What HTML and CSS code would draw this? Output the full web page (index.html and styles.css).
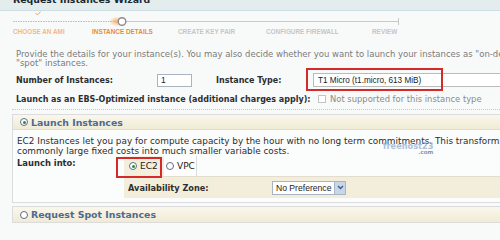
FILE: index.html
```html
<!DOCTYPE html>
<html>
<head>
<meta charset="utf-8">
<link rel="stylesheet" href="styles.css">
</head>
<body>
<div class="page">
  <div class="titlebar"><h1>Request Instances Wizard</h1></div>

  <div class="steps">
    <svg class="track" width="500" height="16" viewBox="0 0 500 16">
      <defs>
        <radialGradient id="glow" cx="0.5" cy="0.5" r="0.5">
          <stop offset="0" stop-color="#f6a850" stop-opacity="0.9"/>
          <stop offset="1" stop-color="#f6a850" stop-opacity="0"/>
        </radialGradient>
      </defs>
      <path d="M35.5 2 L37.5 4 L40.5 0.5" fill="none" stroke="#f0a45a" stroke-width="1"/>
      <line x1="13" y1="10.5" x2="116" y2="10.5" stroke="#f3ad6c" stroke-width="1" stroke-dasharray="1.5 1"/>
      <ellipse cx="117" cy="10.5" rx="8" ry="5" fill="url(#glow)"/>
      <line x1="126" y1="10.5" x2="398" y2="10.5" stroke="#c9c9c9" stroke-width="1"/>
      <line x1="398.5" y1="7" x2="398.5" y2="14" stroke="#c9c9c9" stroke-width="1"/>
      <circle cx="122" cy="10.5" r="3.8" fill="#ffffff" stroke="#8a8a8a" stroke-width="1.4"/>
    </svg>
    <div class="labels">
      <span class="done">Choose an AMI</span>
      <span class="current">Instance Details</span>
      <span>Create Key Pair</span>
      <span>Configure Firewall</span>
      <span>Review</span>
    </div>
  </div>

  <div class="main">
    <p class="intro">
      <span class="line">Provide the details for your instance(s). You may also decide whether you want to launch your instances as "on-demand" or</span>
      <span class="line">"spot" instances.</span>
    </p>

    <div class="row row-top">
      <label class="lbl lbl-num">Number of Instances:</label>
      <span class="input">1</span>
      <label class="lbl lbl-type">Instance Type:</label>
      <span class="select-wrap">
        <span class="select select-wide">T1 Micro (t1.micro, 613 MiB)</span>
        <span class="highlight highlight-type"></span>
      </span>
    </div>

    <div class="row row-ebs">
      <label class="lbl lbl-ebs">Launch as an EBS-Optimized instance (additional charges apply):</label>
      <span class="checkbox"></span>
      <span class="muted">Not supported for this instance type</span>
    </div>

    <div class="panel-head panel-launch">
      <span class="radio radio-on"></span>
      <span>Launch Instances</span>
    </div>
    <div class="panel-body">
      <p class="desc">
        <span class="line">EC2 Instances let you pay for compute capacity by the hour with no long term commitments. This transforms what are</span>
        <span class="line">commonly large fixed costs into much smaller variable costs.</span>
      </p>
      <span class="watermark">freehost23<small>.com</small></span>
      <div class="launch">
        <label class="lbl lbl-into">Launch into:</label>
        <div class="launch-grid">
          <div class="choice-row">
            <span class="choice choice-ec2"><span class="radio radio-on small"></span>EC2<span class="highlight highlight-ec2"></span></span>
            <span class="choice choice-vpc"><span class="radio small"></span>VPC</span>
          </div>
          <div class="az-row">
            <label class="lbl lbl-az">Availability Zone:</label>
            <span class="select select-az">No Preference<span class="arrow"><svg width="7" height="5" viewBox="0 0 7 5"><path d="M1 1 L3.5 3.5 L6 1" fill="none" stroke="#3b5c8c" stroke-width="1.4"/></svg></span></span>
          </div>
        </div>
      </div>
    </div>

    <div class="panel-head panel-spot">
      <span class="radio"></span>
      <span>Request Spot Instances</span>
    </div>
  </div>
</div>
</body>
</html>
```
FILE: styles.css
```css
* { box-sizing: border-box; }

html, body {
  margin: 0;
  padding: 0;
}

body {
  width: 500px;
  height: 240px;
  overflow: hidden;
  background: #f8fafa;
  font-family: "DejaVu Sans", Verdana, sans-serif;
  color: #333;
}

.page {
  width: 620px;
}

.titlebar {
  height: 11px;
  overflow: hidden;
  background: #e4edee;
  border-bottom: 1px solid #cddfe2;
}

.titlebar h1 {
  margin: -6px 0 0 13px;
  font-size: 9.4px;
  line-height: 12px;
  font-weight: bold;
  color: #1c2830;
}

.steps {
  height: 27px;
}

.track {
  display: block;
}

.labels {
  display: grid;
  grid-template-columns: 79px 86px 88px 106px auto;
  padding-left: 13px;
  font-family: "Liberation Sans", Arial, sans-serif;
  font-size: 6.4px;
  line-height: 10px;
  text-transform: uppercase;
  color: #c6c6c6;
  font-weight: bold;
}

.labels .done { color: #f4b784; }
.labels .current { color: #e98b3c; }

.main {
  padding-left: 12px;
}

.line {
  display: block;
  white-space: nowrap;
}

.intro {
  margin: 0;
  padding: 12px 4px 0;
  font-size: 8.5px;
  line-height: 9px;
  color: #7a7a7a;
}

.row {
  display: flex;
  align-items: center;
  padding-left: 4px;
}

.lbl {
  font-size: 8px;
  font-weight: bold;
  color: #2e2e2e;
  white-space: nowrap;
}

.row-top {
  height: 20px;
  margin-top: 2px;
}

.lbl-num { width: 141px; }

.input {
  width: 35px;
  height: 13px;
  border: 1px solid #a9b4c0;
  background: #fff;
  font-family: "Liberation Sans", Arial, sans-serif;
  font-size: 8.5px;
  line-height: 11px;
  padding-left: 3px;
  color: #222;
  margin-right: 24px;
}

.lbl-type { width: 97px; }

.select-wrap {
  position: relative;
  display: flex;
}

.select {
  display: flex;
  align-items: center;
  background: #fff;
  border: 1px solid #bbbbbb;
  font-family: "Liberation Sans", Arial, sans-serif;
  font-size: 8.6px;
  color: #222;
  white-space: nowrap;
}

.select-wide {
  width: 220px;
  height: 14px;
  padding-left: 4px;
  font-size: 8.2px;
}

.highlight {
  position: absolute;
  border: 2px solid #d42a2a;
  pointer-events: none;
}

.highlight-type {
  left: -7px;
  top: -5px;
  width: 137px;
  height: 23px;
}

.row-ebs {
  height: 20px;
  padding-bottom: 1px;
  border-bottom: 1px dotted #c9c9c9;
  margin-bottom: 4px;
}

.lbl-ebs { width: 302px; }

.checkbox {
  width: 8px;
  height: 8px;
  border: 1px solid #c4c4c4;
  background: #fff;
  margin-right: 4px;
}

.muted {
  font-size: 8.4px;
  color: #8a8a8a;
  white-space: nowrap;
}

.panel-head {
  display: flex;
  align-items: center;
  gap: 3px;
  height: 16px;
  padding-left: 7px;
  border: 1px solid #dcdcdc;
  background: linear-gradient(#f9f7ee, #f1ebd4);
  font-size: 9.4px;
  font-weight: bold;
  color: #4f6a92;
  white-space: nowrap;
}

.radio {
  display: inline-flex;
  align-items: center;
  justify-content: center;
  width: 8px;
  height: 8px;
  border-radius: 50%;
  border: 1px solid #5c6e86;
  background: #fff;
  flex: none;
}

.radio-on::after {
  content: "";
  width: 3px;
  height: 3px;
  border-radius: 50%;
  background: #2f8a3c;
}

.radio.small {
  width: 8px;
  height: 8px;
  margin-right: 3px;
}

.panel-body {
  position: relative;
  border: 1px solid #dcdcdc;
  border-top: none;
  background: #fbfcfc;
  padding-bottom: 4px;
  margin-bottom: 3px;
}

.desc {
  margin: 0;
  padding: 6px 4px 0;
  font-size: 8.9px;
  line-height: 10px;
  color: #2c2c2c;
}

.watermark {
  position: absolute;
  left: 370px;
  top: 12px;
  font-family: "DejaVu Sans", sans-serif;
  font-size: 8.2px;
  font-weight: bold;
  color: #8aa6cc;
  opacity: 0.7;
  line-height: 8px;
}

.watermark small {
  display: block;
  font-size: 5.5px;
  text-align: right;
  line-height: 5px;
  color: #4a6a9a;
}

.launch {
  display: flex;
  padding-left: 4px;
}

.lbl-into {
  width: 107px;
  padding-top: 2px;
  font-size: 8.4px;
  flex: none;
}

.launch-grid {
  flex: 1;
  display: flex;
  flex-direction: column;
}

.choice-row {
  display: flex;
  height: 20px;
}

.choice {
  display: flex;
  align-items: center;
  font-size: 9px;
  color: #222;
}

.choice-ec2 {
  position: relative;
  width: 40px;
  padding-left: 5px;
  background: #f4efdc;
}

.choice-vpc {
  width: 33px;
  padding-left: 2px;
  background: #fff;
  border-right: 1px solid #dcdcdc;
}

.highlight-ec2 {
  left: -8px;
  top: 1px;
  width: 46px;
  height: 21px;
}

.az-row {
  display: flex;
  align-items: center;
  height: 22px;
  padding-left: 4px;
  background: #f3eedb;
  border-top: 1px solid #e2ddcc;
}

.lbl-az {
  width: 144px;
  font-size: 8.2px;
}

.select-az {
  width: 74px;
  height: 14px;
  padding-left: 3px;
  border-color: #a8b3c3;
  justify-content: space-between;
}

.arrow {
  display: flex;
  align-items: center;
  justify-content: center;
  width: 11px;
  height: 12px;
  background: #c9d6e8;
  border-left: 1px solid #aab8cc;
}

.panel-spot {
  height: 17px;
}
```
